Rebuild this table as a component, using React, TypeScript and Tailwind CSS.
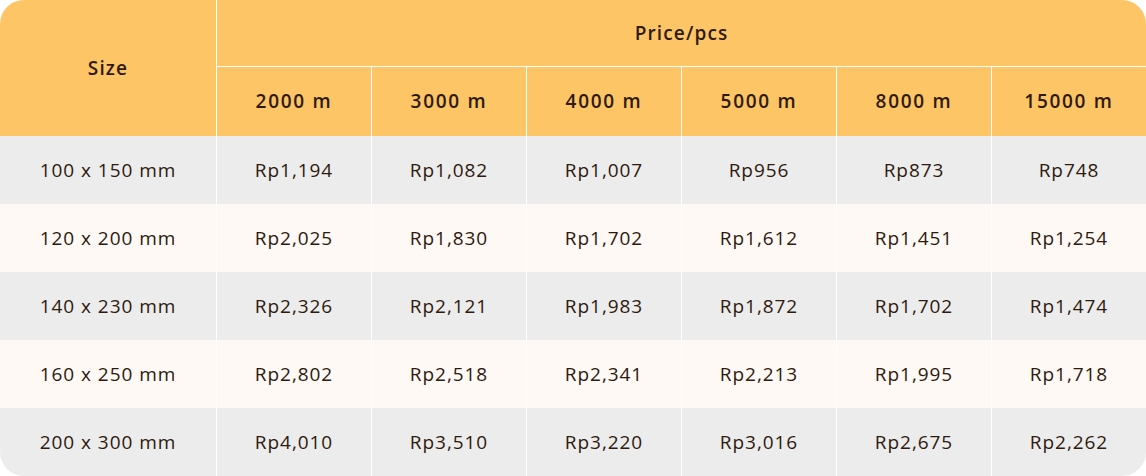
import React from "react";

const cols = ["2000 m", "3000 m", "4000 m", "5000 m", "8000 m", "15000 m"];
const rows: { size: string; prices: string[] }[] = [
  { size: "100 x 150 mm", prices: ["Rp1,194", "Rp1,082", "Rp1,007", "Rp956", "Rp873", "Rp748"] },
  { size: "120 x 200 mm", prices: ["Rp2,025", "Rp1,830", "Rp1,702", "Rp1,612", "Rp1,451", "Rp1,254"] },
  { size: "140 x 230 mm", prices: ["Rp2,326", "Rp2,121", "Rp1,983", "Rp1,872", "Rp1,702", "Rp1,474"] },
  { size: "160 x 250 mm", prices: ["Rp2,802", "Rp2,518", "Rp2,341", "Rp2,213", "Rp1,995", "Rp1,718"] },
  { size: "200 x 300 mm", prices: ["Rp4,010", "Rp3,510", "Rp3,220", "Rp3,016", "Rp2,675", "Rp2,262"] },
];

export default function App() {
  return (
    <div
      className="w-[1146px] h-[476px] bg-white text-[#2e1a0e]"
      style={{ fontFamily: '"Open Sans", "Liberation Sans", sans-serif' }}
    >
      <div className="w-full h-full rounded-[24px] overflow-hidden flex flex-col">
        <div className="flex h-[136px] bg-[#fdc566] font-semibold text-[19px]">
          <div className="w-[216px] flex items-center justify-center tracking-[0.06em]">Size</div>
          <div className="flex-1 flex flex-col border-l border-white">
            <div className="h-[67px] flex items-center justify-center border-b border-white tracking-[0.06em]">
              Price/pcs
            </div>
            <div className="flex-1 flex tracking-[0.09em]">
              {cols.map((c, i) => (
                <div
                  key={c}
                  className={`flex-1 flex items-center justify-center ${i > 0 ? "border-l border-white" : ""}`}
                >
                  {c}
                </div>
              ))}
            </div>
          </div>
        </div>
        {rows.map((r, ri) => (
          <div
            key={r.size}
            className={`flex h-[68px] text-[19px] tracking-[0.05em] ${ri % 2 === 0 ? "bg-[#ececec]" : "bg-[#fef9f4]"}`}
          >
            <div className="w-[216px] flex items-center justify-center">{r.size}</div>
            {r.prices.map((p, i) => (
              <div key={i} className="flex-1 flex items-center justify-center border-l border-white">
                {p}
              </div>
            ))}
          </div>
        ))}
      </div>
    </div>
  );
}
